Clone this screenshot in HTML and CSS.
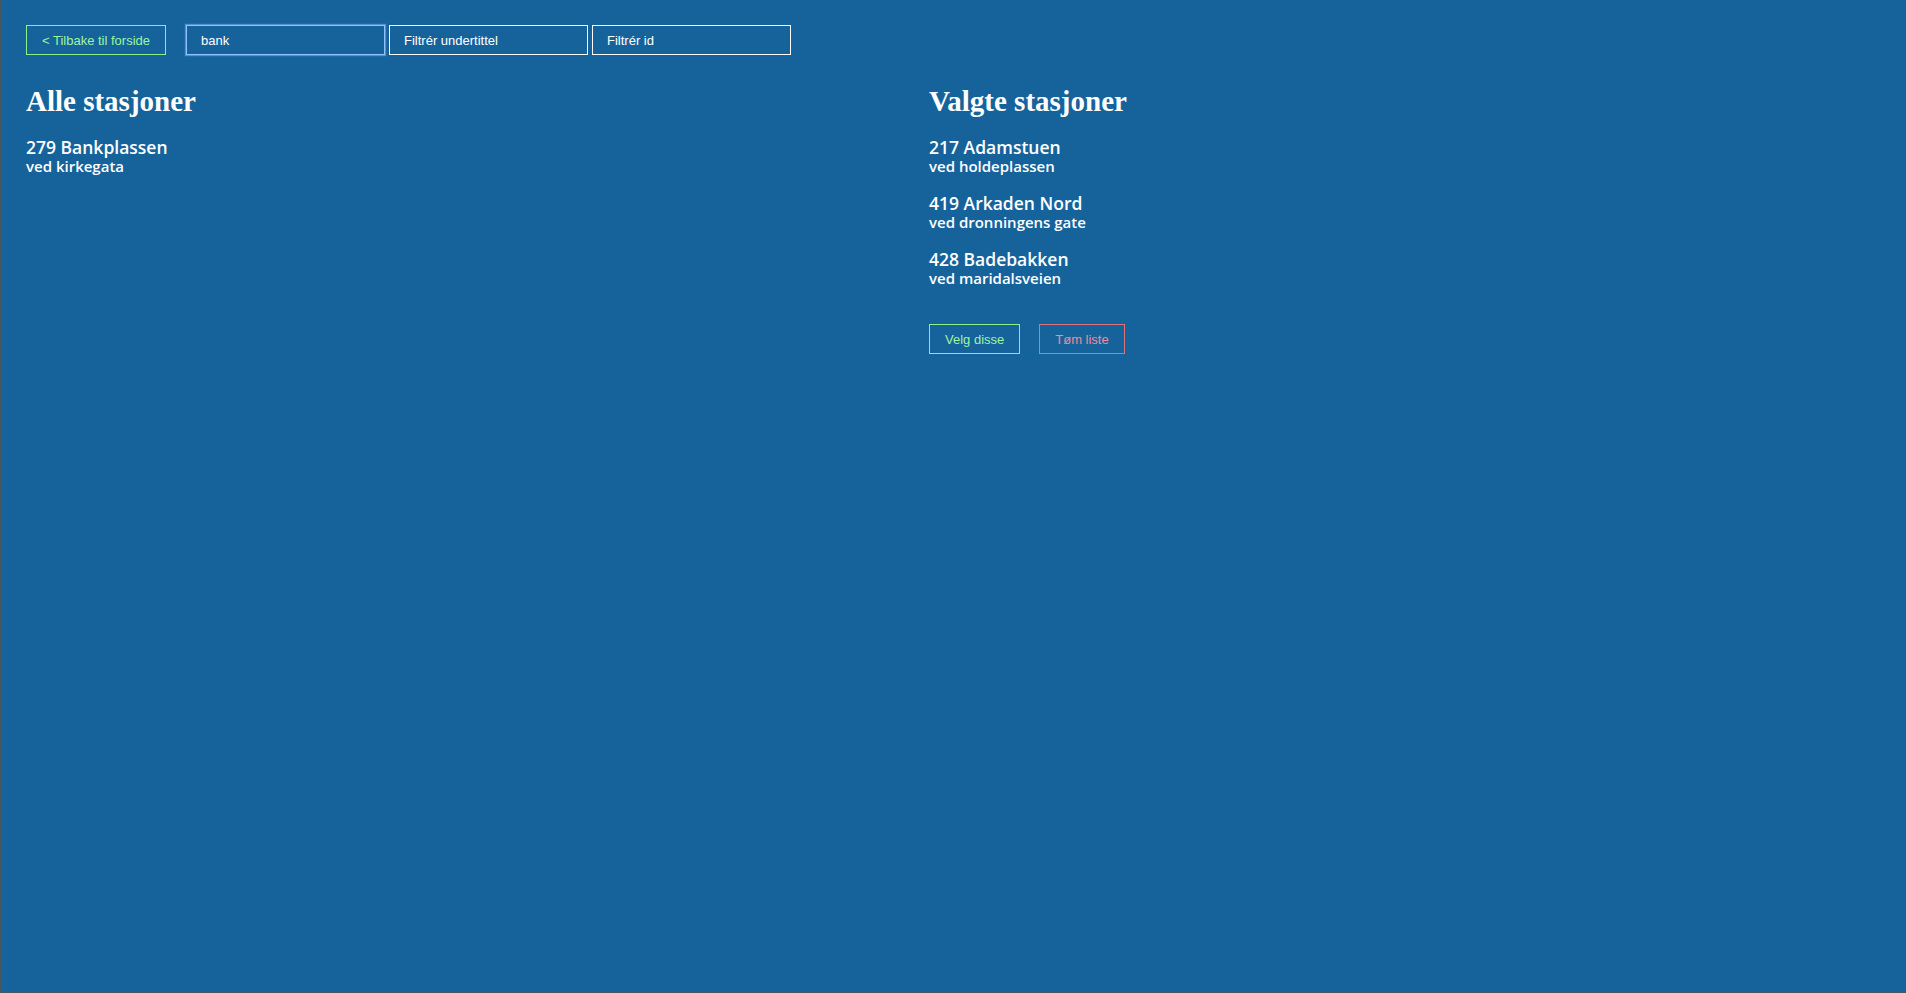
FILE: index.html
```html
<!DOCTYPE html>
<html lang="no">
<head>
<meta charset="utf-8">
<title>Stasjoner</title>
<link rel="stylesheet" href="styles.css">
</head>
<body>
<div class="page">
  <div class="toolbar">
    <button class="btn btn-green" type="button">&lt; Tilbake til forside</button>
    <div class="filters">
      <input class="filter filter-focus" type="text" value="bank" placeholder="Filtrér tittel">
      <input class="filter" type="text" placeholder="Filtrér undertittel">
      <input class="filter" type="text" placeholder="Filtrér id">
    </div>
  </div>
  <div class="columns">
    <section class="col">
      <h1 class="heading">Alle stasjoner</h1>
      <ul class="stations">
        <li class="station"><div class="st-title">279 Bankplassen</div><div class="st-sub">ved kirkegata</div></li>
      </ul>
    </section>
    <section class="col">
      <h1 class="heading">Valgte stasjoner</h1>
      <ul class="stations">
        <li class="station"><div class="st-title">217 Adamstuen</div><div class="st-sub">ved holdeplassen</div></li>
        <li class="station"><div class="st-title">419 Arkaden Nord</div><div class="st-sub">ved dronningens gate</div></li>
        <li class="station"><div class="st-title">428 Badebakken</div><div class="st-sub">ved maridalsveien</div></li>
      </ul>
      <div class="actions">
        <button class="btn btn-green" type="button">Velg disse</button>
        <button class="btn btn-red" type="button">Tøm liste</button>
      </div>
    </section>
  </div>
</div>
</body>
</html>
```

FILE: styles.css
```css
html, body {
  margin: 0;
  padding: 0;
  height: 100%;
}
body {
  background: #16639c;
  color: #ffffff;
  font-family: "Liberation Sans", Arial, sans-serif;
  box-sizing: border-box;
  border-left: 1px solid #4a5560;
  border-bottom: 1px solid #4a5560;
}
.page {
  padding: 25px 25px;
}
.toolbar {
  display: flex;
  align-items: center;
  gap: 20px;
}
.filters {
  display: flex;
  gap: 4px;
}
.btn {
  box-sizing: border-box;
  height: 30px;
  padding: 0 15px;
  background: transparent;
  font-family: "Liberation Sans", Arial, sans-serif;
  font-size: 13px;
  border: 1px solid;
  cursor: pointer;
}
.btn-green {
  color: #9ef59e;
  border-color: #8cf08c;
}
.btn-red {
  color: #f08a96;
  border-color: #e0707c;
}
.filter {
  box-sizing: border-box;
  width: 199px;
  height: 30px;
  padding: 0 14px;
  background: transparent;
  border: 1px solid #ffffff;
  color: #ffffff;
  font-family: "Liberation Sans", Arial, sans-serif;
  font-size: 13px;
  outline: none;
}
.filter::placeholder {
  color: #ffffff;
  opacity: 1;
}
.filter-focus {
  border-color: #8ec2ff;
  box-shadow: 0 0 1px 1px rgba(142, 194, 255, 0.5);
}
.columns {
  display: grid;
  grid-template-columns: 903px 1fr;
  margin-top: 28px;
}
.heading {
  margin: 0;
  font-family: "Liberation Serif", "DejaVu Serif", serif;
  font-weight: bold;
  font-size: 29px;
  line-height: 36px;
  color: #ffffff;
}
.stations {
  list-style: none;
  margin: 19px 0 0;
  padding: 0;
  display: flex;
  flex-direction: column;
  gap: 18px;
}
.station {
  font-family: "Open Sans", Lato, sans-serif;
  font-weight: 600;
}
.st-title {
  font-size: 17.5px;
  line-height: 19px;
}
.st-sub {
  font-size: 15px;
  line-height: 19px;
}
.actions {
  display: flex;
  gap: 19px;
  margin-top: 36px;
}
```
